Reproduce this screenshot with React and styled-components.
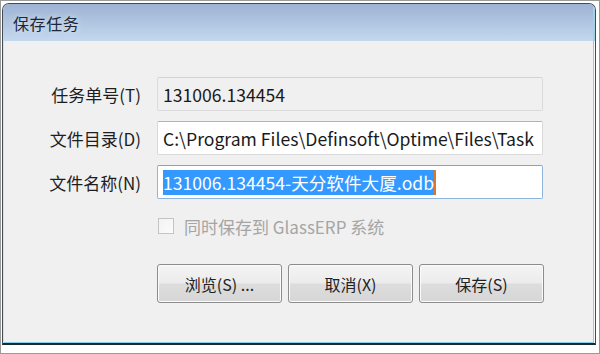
import styled, { createGlobalStyle } from "styled-components"

const GlobalStyle = createGlobalStyle`
    html, body {
        margin: 0;
        padding: 0;
        background: #ffffff;
    }
    * {
        box-sizing: border-box;
    }
`

const FONT = `"Noto Sans CJK SC", "Noto Sans", sans-serif`

const Frame = styled.div`
    width: 600px;
    height: 354px;
    border: 1px solid #9a9a9a;
    background: #ffffff;
    padding: 2px 3px 8px 1px;
    display: flex;
    font-family: ${FONT};
`

const Window = styled.div`
    flex: 1;
    display: flex;
    flex-direction: column;
    border: 1px solid #434a52;
    border-bottom: 2px solid #1b2a30;
    border-radius: 7px 7px 0 0;
    overflow: hidden;
`

const TitleBar = styled.div`
    height: 37px;
    flex: none;
    display: flex;
    align-items: center;
    padding-left: 10px;
    background: linear-gradient(to bottom, #9cb3d3, #c4d8ee);
    box-shadow: inset -2px 0 0 #9fd4e8;
`

const Title = styled.span`
    font-size: 16px;
    letter-spacing: 0.6px;
    color: #1c2738;
    text-shadow: 0 0 6px rgba(255, 255, 255, 0.7);
`

const Content = styled.div`
    flex: 1;
    display: flex;
    flex-direction: column;
    background: #f0f0f0;
    padding-top: 36px;
    box-shadow: inset 1px 0 0 #d5e1ea, inset -1px 0 0 #f7fbfd, inset -2px 0 0 #86cfe8, inset 0 -1px 0 #86cfe8;
`

const Form = styled.div`
    display: grid;
    grid-template-columns: 138px 386px;
    grid-auto-rows: 34px;
    column-gap: 16px;
    row-gap: 10px;
    align-items: center;
`

const Label = styled.div`
    text-align: right;
    font-size: 17px;
    color: #1e1e1e;
    white-space: nowrap;
`

const Field = styled.div`
    height: 34px;
    display: flex;
    align-items: center;
    padding-left: 5px;
    font-size: 17.6px;
    color: #1a1a1a;
    white-space: nowrap;
    overflow: hidden;
    border-radius: 2px;
    background: ${(p) => (p.readOnly ? "#f0f0f0" : "#ffffff")};
    border: 1px solid ${(p) => (p.focused ? "#8fb5de" : "#dadada")};
    border-top-color: ${(p) => (p.focused ? "#7aa5d6" : p.readOnly ? "#d2d2d2" : "#b4b4b4")};
`

const Selected = styled.span`
    background: #3399ff;
    color: #ffffff;
    line-height: 25px;
`

const Caret = styled.span`
    display: inline-block;
    width: 2px;
    height: 25px;
    background: #d8782a;
`

const CheckRow = styled.label`
    grid-column: 2;
    display: flex;
    align-items: center;
    gap: 10px;
    font-size: 17px;
    color: #a5a5a5;
    white-space: nowrap;
`

const Box = styled.span`
    width: 16px;
    height: 16px;
    border: 1px solid #c4c4c4;
    background: linear-gradient(135deg, #f2f2f2, #fbfbfb);
    margin-left: 1px;
`

const Buttons = styled.div`
    display: flex;
    gap: 6px;
    margin-top: 21px;
    padding-left: 154px;
`

const Button = styled.button`
    width: 125px;
    height: 39px;
    border: 1px solid #8c8c8c;
    border-radius: 3px;
    background: linear-gradient(to bottom, #f4f4f4 0%, #ececec 48%, #dddddd 52%, #d6d6d6 100%);
    box-shadow: inset 0 0 0 1px #fbfbfb;
    font-family: ${FONT};
    font-size: 16px;
    color: #222222;
    padding: 0;
`

export default function App() {
    return (
        <>
            <GlobalStyle />
            <Frame>
                <Window>
                    <TitleBar>
                        <Title>保存任务</Title>
                    </TitleBar>
                    <Content>
                        <Form>
                            <Label>任务单号(T)</Label>
                            <Field readOnly>131006.134454</Field>
                            <Label>文件目录(D)</Label>
                            <Field>C:\Program Files\Definsoft\Optime\Files\Task</Field>
                            <Label>文件名称(N)</Label>
                            <Field focused>
                                <Selected>131006.134454-天分软件大厦.odb</Selected>
                                <Caret />
                            </Field>
                            <CheckRow>
                                <Box />
                                同时保存到 GlassERP 系统
                            </CheckRow>
                        </Form>
                        <Buttons>
                            <Button>浏览(S) ...</Button>
                            <Button>取消(X)</Button>
                            <Button>保存(S)</Button>
                        </Buttons>
                    </Content>
                </Window>
            </Frame>
        </>
    )
}
